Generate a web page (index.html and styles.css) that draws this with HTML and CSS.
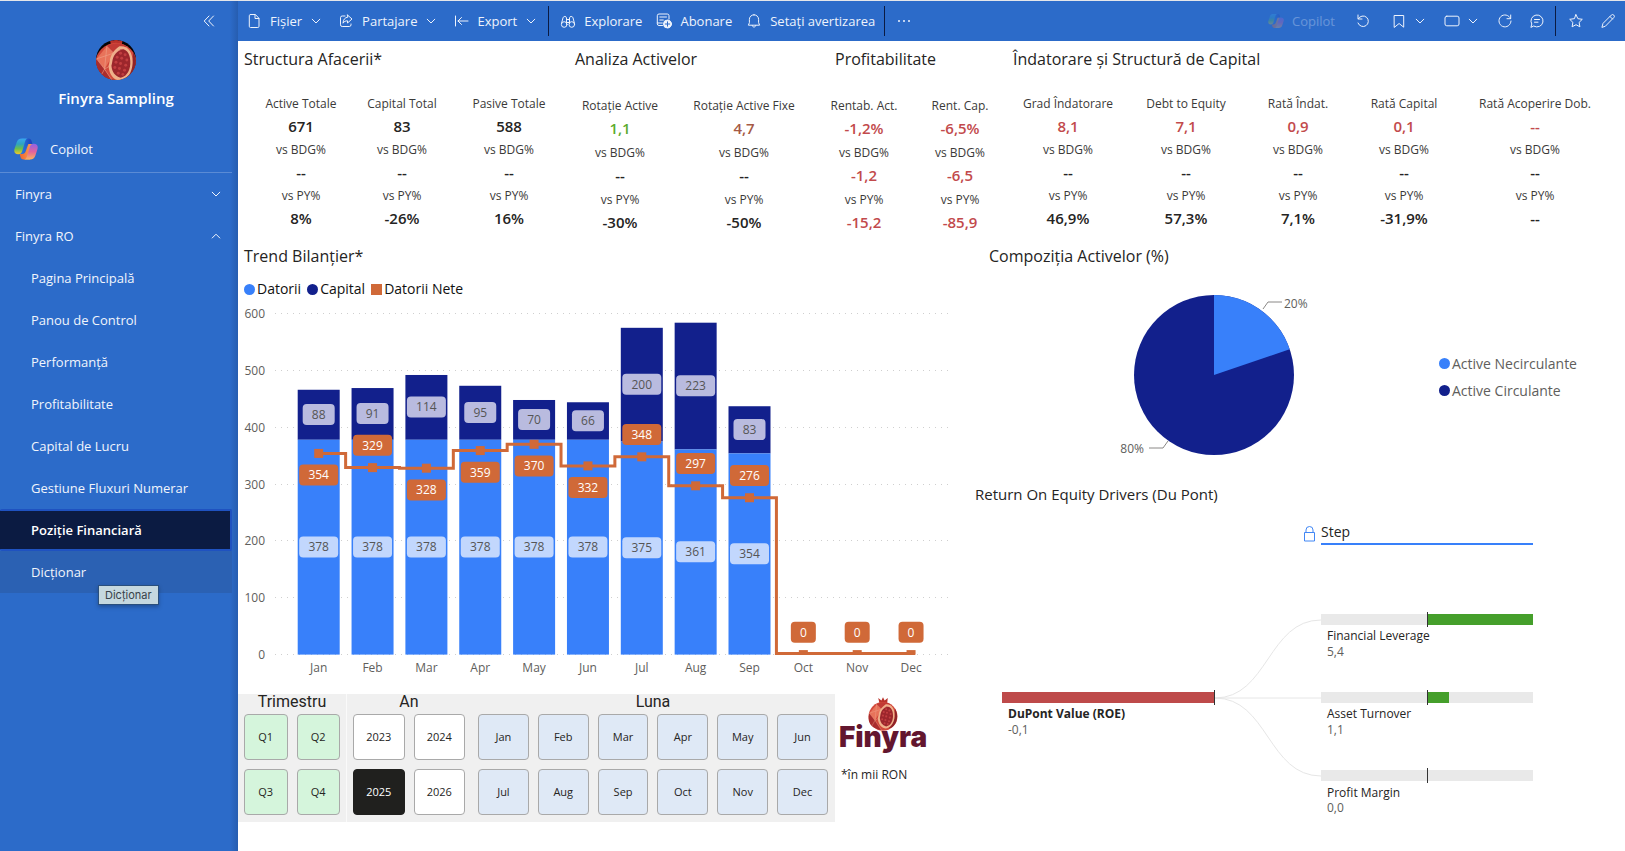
FILE: index.html
```html
<!DOCTYPE html>
<html lang="ro">
<head>
<meta charset="utf-8">
<meta name="viewport" content="width=device-width, initial-scale=1">
<title>Finyra Sampling – Poziție Financiară</title>
<link rel="stylesheet" href="styles.css">
</head>
<body>
<svg class="defs" width="0" height="0" aria-hidden="true">
  <defs>
    <linearGradient id="cp-left" x1="0" y1="0" x2="0" y2="1">
      <stop offset="0" stop-color="#3aa6ee"/><stop offset=".35" stop-color="#2fa3c0"/><stop offset=".65" stop-color="#6cc04a"/><stop offset="1" stop-color="#f2c62a"/>
    </linearGradient>
    <linearGradient id="cp-right" x1="0" y1="0" x2="0" y2="1">
      <stop offset="0" stop-color="#8d63e8"/><stop offset=".5" stop-color="#e0619f"/><stop offset="1" stop-color="#fbb15c"/>
    </linearGradient>
    <linearGradient id="cp-top" x1="0" y1="0" x2="1" y2="0">
      <stop offset="0" stop-color="#2c86e8"/><stop offset="1" stop-color="#1c3fb8"/>
    </linearGradient>
    <linearGradient id="cp-bottom" x1="0" y1="0" x2="1" y2="0">
      <stop offset="0" stop-color="#f0662c"/><stop offset="1" stop-color="#f9a35a"/>
    </linearGradient>
  </defs>
  <symbol id="copilot" viewBox="0 0 24 22">
    <path fill="url(#cp-top)" d="M8 0.600h6.400c1.800 0 2.700.9 3.100 2.500l.8 2.800h-2.400c-2 0-3.100 1-3.700 3L9.600 16H5z"/>
    <path fill="url(#cp-bottom)" d="M16 21.400H9.600c-1.800 0-2.700-.9-3.100-2.500l-.8-2.800h2.400c2 0 3.100-1 3.700-3L14.400 6H19z"/>
    <path fill="url(#cp-left)" d="M8 .6h5.800c-1.500.3-2.200 1.300-2.700 2.900L8.200 13c-.7 2.200-1.800 3.200-4 3.200C1 16.200-.3 14 .5 11L2.600 4.500C3.500 1.800 5 .6 8 .6z"/>
    <path fill="url(#cp-right)" d="M16 21.400h-5.800c1.500-.3 2.200-1.300 2.700-2.900L15.800 9c.7-2.200 1.800-3.200 4-3.200 3.200 0 4.500 2.200 3.700 5.200l-2.100 6.500c-.9 2.700-2.400 3.900-5.400 3.900z"/>
  </symbol>
  <symbol id="pomegranate" viewBox="0 0 40 42">
    <path fill="#b9322b" d="M14 1l4 3 2-4 2 4 4-3-1 8h-9z"/>
    <circle cx="20" cy="24" r="18" fill="#d2493b"/>
    <path fill="#e8735a" d="M3 20L12 9l6 6-8 14z"/>
    <path fill="#a92c2d" d="M3 20l7 9-4 7C2 32 1 26 3 20zM10 29l8 12c-5-.6-9-2.500-12-5z"/>
    <path fill="#c23a34" d="M18 15L12 9c6-3.500 14-3 18 .5L24 12z"/>
    <path fill="#8f2328" d="M35 14c4.500 8 3.500 18-4 24l-4 1 7-12z"/>
    <path fill="#efb08a" d="M23 9c8-1 12 6 11.500 15S29 38.500 23 39c-6-1-9-6-9.500-13C15 24 13 16 23 9z"/>
    <path fill="#9c262c" d="M24 11.500c6-.5 9 5.500 8.500 13S28 36 24 36.500c-5-1.500-7.500-5-8-10.500C17.500 21 16 17 24 11.500z"/>
    <g fill="#c23e40">
      <circle cx="24" cy="15" r="1.300"/><circle cx="28" cy="16.500" r="1.300"/><circle cx="21" cy="18.500" r="1.300"/><circle cx="25" cy="19.500" r="1.300"/><circle cx="29.500" cy="21" r="1.300"/><circle cx="20" cy="23" r="1.300"/><circle cx="24" cy="24" r="1.300"/><circle cx="28.500" cy="25.500" r="1.300"/><circle cx="19" cy="27.500" r="1.300"/><circle cx="23" cy="28.500" r="1.300"/><circle cx="27.500" cy="30" r="1.300"/><circle cx="22" cy="32.500" r="1.300"/><circle cx="26" cy="33.500" r="1.200"/>
    </g>
    <path fill="none" stroke="#f0a58c" stroke-width=".5" d="M3 20l15-5M12 9l-2 20M10 29l5-3M10 29l8 12M3 20l7 9-4 7M12 9l6 6 6-3 6-2.500"/>
  </symbol>
  <symbol id="chev" viewBox="0 0 16 16"><path d="M4.200 6.200L8 10l3.800-3.800"/></symbol>
</svg>

<div class="app">
  <aside class="sidebar">
    <button class="collapse" aria-label="Restrângere"><svg class="icon" viewBox="0 0 16 16"><path d="M8 3L3.200 8 8 13M12.500 3L7.700 8l4.800 5"/></svg></button>
    <div class="brand">
      <span class="avatar"><svg viewBox="0 0 40 40"><rect width="40" height="40" fill="#060506"/><use href="#pomegranate" x="-3" y="-4" width="46" height="48"/></svg></span>
      <h1>Finyra Sampling</h1>
    </div>
    <a class="copilot-link" href="#"><svg viewBox="0 0 24 22"><use href="#copilot"/></svg>Copilot</a>
    <nav>
      <button class="nav-group">Finyra<svg class="icon" viewBox="0 0 16 16"><use href="#chev"/></svg></button>
      <button class="nav-group">Finyra RO<svg class="icon" viewBox="0 0 16 16"><path d="M4.200 10L8 6.200l3.800 3.800"/></svg></button>
      <a href="#">Pagina Principală</a>
      <a href="#">Panou de Control</a>
      <a href="#">Performanță</a>
      <a href="#">Profitabilitate</a>
      <a href="#">Capital de Lucru</a>
      <a href="#">Gestiune Fluxuri Numerar</a>
      <a href="#" class="active" aria-current="page">Poziție Financiară</a>
      <a href="#" class="hover">Dicționar<span class="tooltip" role="tooltip">Dicționar</span></a>
    </nav>
  </aside>

  <div class="main">
    <header class="toolbar">
      <button><svg class="icon" viewBox="0 0 16 16"><path d="M4.500 1.500h4.800L13 5.300v8a1.200 1.200 0 0 1-1.200 1.200H4.500a1.200 1.200 0 0 1-1.200-1.200V2.700a1.200 1.200 0 0 1 1.200-1.200zM9 1.700v3.800h3.800"/></svg>Fișier<svg class="icon more" viewBox="0 0 16 16"><use href="#chev"/></svg></button>
      <button><svg class="icon" viewBox="0 0 16 16"><path d="M7 3H4.200A1.700 1.700 0 0 0 2.500 4.700v7.100a1.700 1.700 0 0 0 1.700 1.700h7.100a1.700 1.700 0 0 0 1.700-1.700V11M9.500 2l4.500 4-4.500 4V7.800C7.500 7.800 6 8.500 5 10.200 5.200 6.500 7 4.500 9.500 4.200z"/></svg>Partajare<svg class="icon more" viewBox="0 0 16 16"><use href="#chev"/></svg></button>
      <button><svg class="icon" viewBox="0 0 16 16"><path d="M2.500 3v10M15 8H5M8.500 4.500L5 8l3.500 3.500"/></svg>Export<svg class="icon more" viewBox="0 0 16 16"><use href="#chev"/></svg></button>
      <span class="sep"></span>
      <button><svg class="icon" viewBox="0 0 16 16"><circle cx="4.200" cy="11.500" r="2.800"/><circle cx="11.800" cy="11.500" r="2.800"/><path d="M1.500 10.500L3 4.800C3.400 3 6.300 3 6.500 4.800v6M14.500 10.500L13 4.800C12.600 3 9.700 3 9.500 4.800v6M6.500 6.500h3M6.500 9.500h3"/></svg>Explorare</button>
      <button><svg class="icon" viewBox="0 0 16 16"><path d="M6.500 12.500H3a1.700 1.700 0 0 1-1.700-1.700V2.700A1.700 1.700 0 0 1 3 1h8.300A1.700 1.700 0 0 1 13 2.700V6M3.800 4h6.700M3.800 7h3.500M1.300 10h5"/><circle cx="11.500" cy="11" r="4" fill="currentColor"/><path class="cut" d="M11.500 8.800v4.400M9.300 11h4.400"/></svg>Abonare</button>
      <button><svg class="icon" viewBox="0 0 16 16"><path d="M8 1.800c2.700 0 4.600 2 4.600 4.600v3.300l1 2.500H2.400l1-2.500V6.400C3.400 3.800 5.300 1.800 8 1.800zM6.200 12.400c.1 2.300 3.500 2.300 3.600 0"/></svg>Setați avertizarea</button>
      <span class="sep"></span>
      <button aria-label="Mai multe"><svg class="icon dots" viewBox="0 0 16 16"><circle cx="3" cy="8" r="1"/><circle cx="8" cy="8" r="1"/><circle cx="13" cy="8" r="1"/></svg></button>
      <div class="tools">
        <button class="off" disabled><svg class="icon" viewBox="0 0 24 22"><use href="#copilot"/></svg>Copilot</button>
        <button class="undo" aria-label="Resetare"><svg class="icon" viewBox="0 0 16 16"><path d="M3 2v4h4M3.300 5.800A5.300 5.300 0 1 1 3 10"/></svg></button>
        <button aria-label="Marcaje"><svg class="icon" viewBox="0 0 16 16"><path d="M3.500 2.500h9.200v11.700L8.100 10.500l-4.600 3.700z"/></svg><svg class="icon" viewBox="0 0 16 16"><use href="#chev"/></svg></button>
        <button aria-label="Vizualizare"><svg class="icon" viewBox="0 0 16 16"><rect x="1" y="3.200" width="14" height="9.600" rx="1.800"/></svg><svg class="icon" viewBox="0 0 16 16"><use href="#chev"/></svg></button>
        <button aria-label="Reîmprospătare"><svg class="icon" viewBox="0 0 16 16"><path d="M13.500 5.500A6 6 0 1 0 14 8M13.700 2v3.700H10"/></svg></button>
        <button aria-label="Comentarii"><svg class="icon" viewBox="0 0 16 16"><path d="M2 14l.8-3A6 6 0 1 1 5 13.200zM5.500 6.500h5M5.500 9.200h3.500"/></svg></button>
        <span class="sep"></span>
        <button aria-label="Favorite"><svg class="icon" viewBox="0 0 16 16"><path d="M8 1.700l1.900 4 4.400.6-3.200 3.100.8 4.400L8 11.700l-3.900 2.100.8-4.400L1.700 6.300l4.400-.6z"/></svg></button>
        <button aria-label="Editare"><svg class="icon" viewBox="0 0 16 16"><path d="M2 14l1-3.600 8.300-8.300a1.700 1.700 0 0 1 2.500 2.500L5.600 13zM10 3.500L12.500 6"/></svg></button>
      </div>
    </header>

    <main class="report">
      <section class="kpis">
        <div class="group g1">
          <h2>Structura Afacerii*</h2>
          <div class="cards">
            <dl><dt>Active Totale</dt><dd>671</dd><dt>vs BDG%</dt><dd>--</dd><dt>vs PY%</dt><dd>8%</dd></dl>
            <dl><dt>Capital Total</dt><dd>83</dd><dt>vs BDG%</dt><dd>--</dd><dt>vs PY%</dt><dd>-26%</dd></dl>
            <dl><dt>Pasive Totale</dt><dd>588</dd><dt>vs BDG%</dt><dd>--</dd><dt>vs PY%</dt><dd>16%</dd></dl>
          </div>
        </div>
        <div class="group g2 airy">
          <h2>Analiza Activelor</h2>
          <div class="cards">
            <dl><dt>Rotație Active</dt><dd class="good">1,1</dd><dt>vs BDG%</dt><dd>--</dd><dt>vs PY%</dt><dd>-30%</dd></dl>
            <dl><dt>Rotație Active Fixe</dt><dd class="warn">4,7</dd><dt>vs BDG%</dt><dd>--</dd><dt>vs PY%</dt><dd>-50%</dd></dl>
          </div>
        </div>
        <div class="group g3 airy">
          <h2>Profitabilitate</h2>
          <div class="cards">
            <dl><dt>Rentab. Act.</dt><dd class="bad">-1,2%</dd><dt>vs BDG%</dt><dd class="bad">-1,2</dd><dt>vs PY%</dt><dd class="bad">-15,2</dd></dl>
            <dl><dt>Rent. Cap.</dt><dd class="bad">-6,5%</dd><dt>vs BDG%</dt><dd class="bad">-6,5</dd><dt>vs PY%</dt><dd class="bad">-85,9</dd></dl>
          </div>
        </div>
        <div class="group g4">
          <h2>Îndatorare și Structură de Capital</h2>
          <div class="cards">
            <dl><dt>Grad Îndatorare</dt><dd class="bad">8,1</dd><dt>vs BDG%</dt><dd>--</dd><dt>vs PY%</dt><dd>46,9%</dd></dl>
            <dl><dt>Debt to Equity</dt><dd class="bad">7,1</dd><dt>vs BDG%</dt><dd>--</dd><dt>vs PY%</dt><dd>57,3%</dd></dl>
            <dl><dt>Rată Îndat.</dt><dd class="bad">0,9</dd><dt>vs BDG%</dt><dd>--</dd><dt>vs PY%</dt><dd>7,1%</dd></dl>
            <dl><dt>Rată Capital</dt><dd class="bad">0,1</dd><dt>vs BDG%</dt><dd>--</dd><dt>vs PY%</dt><dd>-31,9%</dd></dl>
            <dl><dt>Rată Acoperire Dob.</dt><dd class="bad">--</dd><dt>vs BDG%</dt><dd>--</dd><dt>vs PY%</dt><dd>--</dd></dl>
          </div>
        </div>
      </section>

      <div class="panels">
        <section class="left">
          <h2>Trend Bilanțier*</h2>
          <ul class="legend">
            <li><i class="dot debt"></i>Datorii</li>
            <li><i class="dot equity"></i>Capital</li>
            <li><i class="dot net"></i>Datorii Nete</li>
          </ul>
          <svg id="trend" class="chart" viewBox="0 0 722 382" role="img" aria-label="Trend Bilanțier"></svg>

          <div class="bottom">
            <fieldset class="slicer quarters">
              <legend>Trimestru</legend>
              <div class="tiles">
                <button>Q1</button><button>Q2</button><button>Q3</button><button>Q4</button>
              </div>
            </fieldset>
            <fieldset class="slicer years">
              <legend>An</legend>
              <div class="tiles">
                <button>2023</button><button>2024</button><button aria-pressed="true">2025</button><button>2026</button>
              </div>
            </fieldset>
            <fieldset class="slicer months">
              <legend>Luna</legend>
              <div class="tiles">
                <button>Jan</button><button>Feb</button><button>Mar</button><button>Apr</button><button>May</button><button>Jun</button>
                <button>Jul</button><button>Aug</button><button>Sep</button><button>Oct</button><button>Nov</button><button>Dec</button>
              </div>
            </fieldset>
            <div class="logo">
              <svg class="logo-art" viewBox="0 0 92 60" role="img" aria-label="Finyra">
                <use href="#pomegranate" x="29" y="0" width="32" height="34"/>
                <text x="45" y="50" text-anchor="middle" class="wordmark">Finyra</text>
              </svg>
              <p>*în mii RON</p>
            </div>
          </div>
        </section>

        <section class="right">
          <h2>Compoziția Activelor (%)</h2>
          <div class="composition">
            <svg class="chart" viewBox="0 0 479 217" role="img" aria-label="Compoziția Activelor">
              <circle class="fill-equity" cx="254" cy="108" r="80"/>
              <path class="fill-debt" d="M254 108V28A80 80 0 0 1 329.700 82.200z"/>
              <path class="leader" d="M303 42l5-7h14M208 174l-5 7h-14"/>
              <text class="axis" x="324" y="41">20%</text>
              <text class="axis" x="184" y="186" text-anchor="end">80%</text>
            </svg>
            <ul class="legend stacked">
              <li><i class="dot debt"></i>Active Necirculante</li>
              <li><i class="dot equity"></i>Active Circulante</li>
            </ul>
          </div>
          <h3>Return On Equity Drivers (Du Pont)</h3>
          <svg class="chart tree" viewBox="0 0 665 316" role="img" aria-label="Return On Equity Drivers">
            <path class="lock" d="M344.500 28.500h10v8.500h-10zM346 28.500v-2.500a3.500 3.500 0 0 1 7 0v2.500"/>
            <text class="step" x="361" y="33">Step</text>
            <rect class="rule" x="361" y="39" width="212" height="2"/>
            <path class="link" d="M255 194C308 194 308 116 361 116M255 194h106M255 194C308 194 308 272 361 272"/>
            <rect class="neg" x="42" y="188" width="212" height="11"/>
            <rect class="track" x="361" y="110" width="212" height="11"/>
            <rect class="track" x="361" y="188" width="212" height="11"/>
            <rect class="track" x="361" y="266" width="212" height="11"/>
            <rect class="pos" x="468" y="110" width="105" height="11"/>
            <rect class="pos" x="468" y="188" width="21" height="11"/>
            <path class="tick" d="M254.500 186v15M467.500 108v15M467.500 186v15M467.500 264v15"/>
            <text class="name root" x="48" y="214">DuPont Value (ROE)</text>
            <text class="num" x="48" y="230">-0,1</text>
            <text class="name" x="367" y="136">Financial Leverage</text>
            <text class="num" x="367" y="152">5,4</text>
            <text class="name" x="367" y="214">Asset Turnover</text>
            <text class="num" x="367" y="230">1,1</text>
            <text class="name" x="367" y="293">Profit Margin</text>
            <text class="num" x="367" y="308">0,0</text>
          </svg>
        </section>
      </div>
    </main>
  </div>
</div>
<script src="chart.js"></script>
</body>
</html>
```

FILE: styles.css
```css
* { box-sizing: border-box; }

body {
  margin: 0;
  border-top: 1px solid #e4e6ea;
  background: #fff;
  color: #252423;
  font-family: "Open Sans", "Noto Sans", sans-serif;
  font-size: 13px;
}

h1, h2, h3, p, ul, dl, dd { margin: 0; padding: 0; }
ul { list-style: none; }
a { color: inherit; text-decoration: none; }
button { border: 0; background: none; color: inherit; font: inherit; padding: 0; cursor: pointer; }
.defs { position: absolute; }

.icon {
  width: 16px;
  height: 16px;
  flex: none;
  fill: none;
  stroke: currentColor;
  stroke-width: 1;
  stroke-linecap: round;
  stroke-linejoin: round;
}
.icon.dots { fill: currentColor; stroke: none; }
.icon .cut { stroke: #2c6bc9; }

.app { display: grid; grid-template-columns: 238px 1fr; min-height: calc(100vh - 1px); }

/* Sidebar */
.sidebar {
  display: flex;
  flex-direction: column;
  padding-right: 6px;
  background: linear-gradient(to left, #265db0, #2c6bc9 8px);
  color: #f1f5fc;
}
.collapse { align-self: flex-end; height: 16px; margin: 12px 15px 0 0; }
.brand { display: flex; flex-direction: column; align-items: center; gap: 7px; margin-top: 11px; }
.avatar { width: 40px; height: 40px; border-radius: 50%; overflow: hidden; }
.avatar svg { display: block; }
.brand h1 { font-size: 15px; font-weight: 600; line-height: 22px; color: #fff; }
.copilot-link {
  display: flex;
  align-items: center;
  gap: 12px;
  height: 48px;
  margin-top: 16px;
  padding-left: 14px;
  border-bottom: 1px solid #5a8bd5;
}
.copilot-link svg { width: 24px; height: 22px; }
.copilot-link svg use { stroke: none; }
nav { display: flex; flex-direction: column; }
nav > * { display: flex; align-items: center; height: 42px; padding-left: 31px; }
nav .nav-group { justify-content: space-between; padding: 0 8px 0 15px; }
.active {
  border: 2px solid #1f52c0;
  border-left: 0;
  border-radius: 2px;
  background: #0b1b42;
  color: #fff;
  font-weight: 600;
}
.hover { position: relative; background: #2b61b3; }
.tooltip {
  position: absolute;
  left: 98px;
  top: 34px;
  padding: 0 6px;
  border: 1px solid #2a4f7c;
  background: #c5d8df;
  color: #37424a;
  font: 11px/18px Inter, sans-serif;
  box-shadow: 0 2px 4px rgba(0, 0, 0, .25);
}

/* Toolbar */
.toolbar { display: flex; align-items: center; height: 40px; padding: 0 1px; background: #2c6bc9; color: #eef3fc; }
.toolbar button { display: flex; align-items: center; gap: 8px; height: 100%; padding: 0 7px; white-space: nowrap; }
.toolbar .more { margin-left: -2px; }
.toolbar .off .icon { stroke: none; }
.sep { width: 1px; height: 30px; margin: 0 4px 0 2px; background: #0b1b42; }
.tools { display: flex; align-items: center; height: 100%; margin-left: auto; }
.tools button { gap: 5px; padding: 0 8px; }
.tools .off { gap: 8px; opacity: .3; }
.tools .undo { margin: 0 4px; }

/* Report */
.report { padding-top: 7px; }
h2 { font-size: 16px; font-weight: 400; line-height: 22px; white-space: nowrap; }
h3 { font-size: 15px; font-weight: 400; line-height: 20px; padding-left: 15px; }

.kpis { display: grid; grid-template-columns: 328fr 248fr 192fr 619fr; height: 197px; }
.cards { display: grid; margin-top: 23px; text-align: center; }
.airy .cards { margin-top: 25px; }
.g1 h2 { padding-left: 6px; }
.g2 h2 { padding-left: 9px; }
.g3 h2 { padding-left: 21px; }
.g4 h2 { padding-left: 7px; }
.g1 .cards { grid-template-columns: 12fr 102fr 100fr 114fr; }
.g1 .cards dl:first-child { grid-column: 2; }
.g2 .cards { grid-template-columns: 108fr 140fr; }
.g3 .cards { grid-template-columns: 100fr 92fr; }
.g4 .cards { grid-template-columns: 124fr 112fr 112fr 100fr 162fr 9fr; }
dt, dd { line-height: 22px; white-space: nowrap; }
dt { font-size: 12px; color: #3b3a39; }
dd { font-size: 15px; font-weight: 600; margin-bottom: 2px; }
.airy dd { margin-bottom: 3px; }
.good { color: #5cab2e; }
.warn { color: #a65a45; }
.bad { color: #c24a4c; }

.panels { display: grid; grid-template-columns: 722fr 665fr; }
.left h2 { padding-left: 6px; }
.right h2 { padding-left: 29px; }
.chart { display: block; width: 100%; height: auto; }

.legend { display: flex; gap: 6px; margin-top: 12px; padding-left: 6px; font-size: 14px; line-height: 20px; color: #111; }
.legend li { display: flex; align-items: center; gap: 2px; white-space: nowrap; }
.dot { width: 11px; height: 11px; border-radius: 50%; flex: none; }
.dot.debt { background: #3880fa; }
.dot.equity { background: #12208c; }
.dot.net { background: #d06938; border-radius: 0; }
.legend.stacked { flex-direction: column; justify-content: center; gap: 0; margin: 0; padding: 2px 0 0; line-height: 27px; color: #605e5c; }

.composition { display: grid; grid-template-columns: 479fr 186fr; }

/* Chart parts */
.fill-debt { fill: #3880fa; }
.fill-equity { fill: #12208c; }
.fill-net { fill: #d06938; }
.pill-debt { fill: #c2d7fd; }
.pill-equity { fill: #b9bbdf; }
.grid { stroke: #cfcfcf; stroke-width: 1; stroke-dasharray: 1 5; }
.net-line { fill: none; stroke: #d06938; stroke-width: 3; }
.axis { font-size: 12px; fill: #605e5c; }
.pill-text { font-size: 12px; fill: #555; text-anchor: middle; }
.pill-text.on-net { fill: #fff; }
.leader { fill: none; stroke: #8a8886; }
.lock { fill: none; stroke: #4187f5; }
.rule { fill: #3880fa; }
.link { fill: none; stroke: #e6e6e6; }
.track { fill: #e9e9e9; }
.neg { fill: #be4a4a; }
.pos { fill: #459f2b; }
.tick { stroke: #333; }
.step { font-size: 14px; fill: #252423; }
.name { font-size: 12px; fill: #252423; }
.name.root { font-weight: 700; }
.num { font-size: 12px; fill: #605e5c; }

/* Slicers */
.bottom { display: grid; grid-template-columns: 109fr 125fr 363fr 125fr; margin-top: 13px; }
.slicer { min-width: 0; margin: 0; border: 0; padding: 0 7px 7px 6px; background: #f0f0f0; }
.slicer legend { float: left; width: 100%; margin-bottom: 4px; padding: 0; font: 16px/16px Roboto, sans-serif; text-align: center; }
.tiles { clear: both; display: grid; grid-template-columns: 1fr 1fr; gap: 9px; }
.months .tiles { grid-template-columns: repeat(6, 1fr); }
.tiles button { height: 46px; border: 1px solid #a9a9a9; border-radius: 4px; padding-bottom: 2px; background: #fff; font-size: 11px; }
.quarters { padding-right: 6px; border-right: 1px solid #fafafa; }
.quarters button { background: #d5f5dc; }
.months button { background: #dfe9f6; }
.tiles [aria-pressed="true"] { background: #20201e; border-color: #20201e; color: #fff; }
.logo { padding: 3px 0 0 3px; }
.logo-art { display: block; width: 92px; height: 60px; }
.wordmark { font: 900 28px Inter, sans-serif; fill: #63162f; }
.logo p { margin: 8px 0 0 3px; font-size: 12px; line-height: 20px; }
```

FILE: chart.js
```javascript
const months = ["Jan", "Feb", "Mar", "Apr", "May", "Jun", "Jul", "Aug", "Sep", "Oct", "Nov", "Dec"];
const debt = [378, 378, 378, 378, 378, 378, 375, 361, 354];
const equity = [88, 91, 114, 95, 70, 66, 200, 223, 83];
const net = [354, 329, 328, 359, 370, 332, 348, 297, 276, 0, 0, 0];
const netLabelBelow = [true, false, true, true, true, true, false, false, false, false, false, false];

const svg = document.getElementById("trend");
const BASE = 355.6;
const STEP = 53.85;
const BAR = 42;
const y = (v) => BASE - (v * 341) / 600;
const x = (i) => 80.7 + i * STEP;

function add(tag, attrs, text) {
  const el = document.createElementNS("http://www.w3.org/2000/svg", tag);
  for (const key in attrs) el.setAttribute(key, attrs[key]);
  if (text !== undefined) el.textContent = text;
  svg.appendChild(el);
}

function pill(cx, cy, value, cls, textCls) {
  const width = [0, 25, 32, 39][String(value).length];
  add("rect", { x: cx - width / 2, y: cy - 10.8, width, height: 21, rx: 4, class: cls });
  add("text", { x: cx, y: cy + 4, class: textCls }, value);
}

for (let v = 0; v <= 600; v += 100) {
  const gy = Math.floor(y(v)) + 0.5;
  add("line", { x1: 37, x2: 712, y1: gy, y2: gy, class: "grid" });
  add("text", { x: 27, y: gy + 4, class: "axis", "text-anchor": "end" }, v);
}

months.forEach((m, i) => {
  add("text", { x: x(i), y: BASE + 17, class: "axis", "text-anchor": "middle" }, m);
});

debt.forEach((d, i) => {
  const left = x(i) - BAR / 2;
  add("rect", { x: left, y: y(d + equity[i]), width: BAR, height: y(0) - y(equity[i]), class: "fill-equity" });
  add("rect", { x: left, y: y(d), width: BAR, height: BASE - y(d), class: "fill-debt" });
});

let path = `M${x(0)} ${y(net[0])}`;
for (let i = 1; i < net.length; i++) {
  path += `H${x(i) - STEP / 2}V${Math.min(y(net[i]), BASE - 1)}`;
}
add("path", { d: path + `H${x(11) + 4}`, class: "net-line" });

net.forEach((n, i) => {
  const top = y(n) - 4.5;
  add("rect", { x: x(i) - 4.5, y: top, width: 9, height: Math.min(9, BASE - top), class: "fill-net" });
});

debt.forEach((d, i) => {
  pill(x(i), y(d / 2), d, "pill-debt", "pill-text");
  pill(x(i), y(d + equity[i] / 2), equity[i], "pill-equity", "pill-text");
});
net.forEach((n, i) => {
  pill(x(i), y(n) + (netLabelBelow[i] ? 22 : -22), n, "fill-net", "pill-text on-net");
});
```
